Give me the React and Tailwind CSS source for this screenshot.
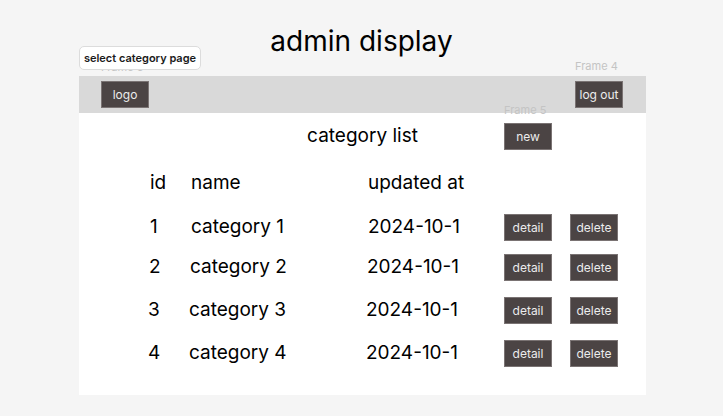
import React from "react";

const rows = [
  { id: 1, name: "category 1", date: "2024-10-1", shift: "ml-0", btnShift: "ml-0" },
  { id: 2, name: "category 2", date: "2024-10-1", shift: "-ml-[1px]", btnShift: "ml-[1px]" },
  { id: 3, name: "category 3", date: "2024-10-1", shift: "-ml-[2px]", btnShift: "ml-[2px]" },
  { id: 4, name: "category 4", date: "2024-10-1", shift: "-ml-[2px]", btnShift: "ml-[2px]" },
];

const rowGaps = ["mt-[17px]", "mt-[13px]", "mt-[16px]", "mt-[16px]"];

const Btn = ({ children }) => (
  <div className="w-[48px] h-[27px] flex items-center justify-center bg-[#4b4444] border border-[#7a7373] text-[12px] text-[#ececec]">
    {children}
  </div>
);

const App = () => {
  return (
    <div
      className="relative w-[723px] h-[416px] bg-[#f5f5f5] overflow-hidden text-black"
      style={{ fontFamily: "Inter, 'Noto Sans', sans-serif" }}
    >
      <div className="h-[76px] pt-[24px]">
        <h1 className="text-center text-[28px] leading-[34px] font-normal">
          admin display
        </h1>
      </div>

      {/* canvas frame labels */}
      <span className="absolute left-[101px] top-[61px] text-[11px] leading-[12px] text-[#c4c4c4]">
        Frame 3
      </span>
      <span className="absolute left-[575px] top-[60px] text-[11px] leading-[12px] text-[#c4c4c4]">
        Frame 4
      </span>
      <div className="absolute left-[79px] top-[46px] w-[122px] h-[24px] bg-white border border-[#dcdcdc] rounded-[5px] flex items-center justify-center text-[11px] font-semibold text-[#1a1a1a]">
        select category page
      </div>

      <div className="ml-[79px] w-[567px] h-[319px] bg-white">
        <div className="h-[37px] bg-[#d9d9d9] flex justify-between items-start pt-[5px] pl-[22px] pr-[23px]">
          <Btn>logo</Btn>
          <Btn>log out</Btn>
        </div>

        <div className="relative flex items-center mt-[10px] h-[27px]">
          <div className="w-[425px] pl-[142px] text-center text-[19px]">
            category list
          </div>
          <Btn>new</Btn>
          <span className="absolute left-[425px] -top-[19px] text-[11px] leading-[12px] text-[#c4c4c4]">
            Frame 5
          </span>
        </div>

        <div className="flex items-center h-[27px] mt-[20px] text-[19px]">
          <span className="w-[41px] ml-[71px]">id</span>
          <span className="w-[177px]">name</span>
          <span>updated at</span>
        </div>

        {rows.map((r, i) => (
          <div key={r.id} className={`flex items-center h-[27px] ${rowGaps[i]} text-[19px]`}>
            <div className={`flex items-center w-[425px] ${r.shift}`}>
              <span className="w-[41px] ml-[71px]">{r.id}</span>
              <span className="w-[177px]">{r.name}</span>
              <span>{r.date}</span>
            </div>
            <div className={`flex gap-[18px] ${r.btnShift}`}>
              <Btn>detail</Btn>
              <Btn>delete</Btn>
            </div>
          </div>
        ))}
      </div>
    </div>
  );
};

export default App;
